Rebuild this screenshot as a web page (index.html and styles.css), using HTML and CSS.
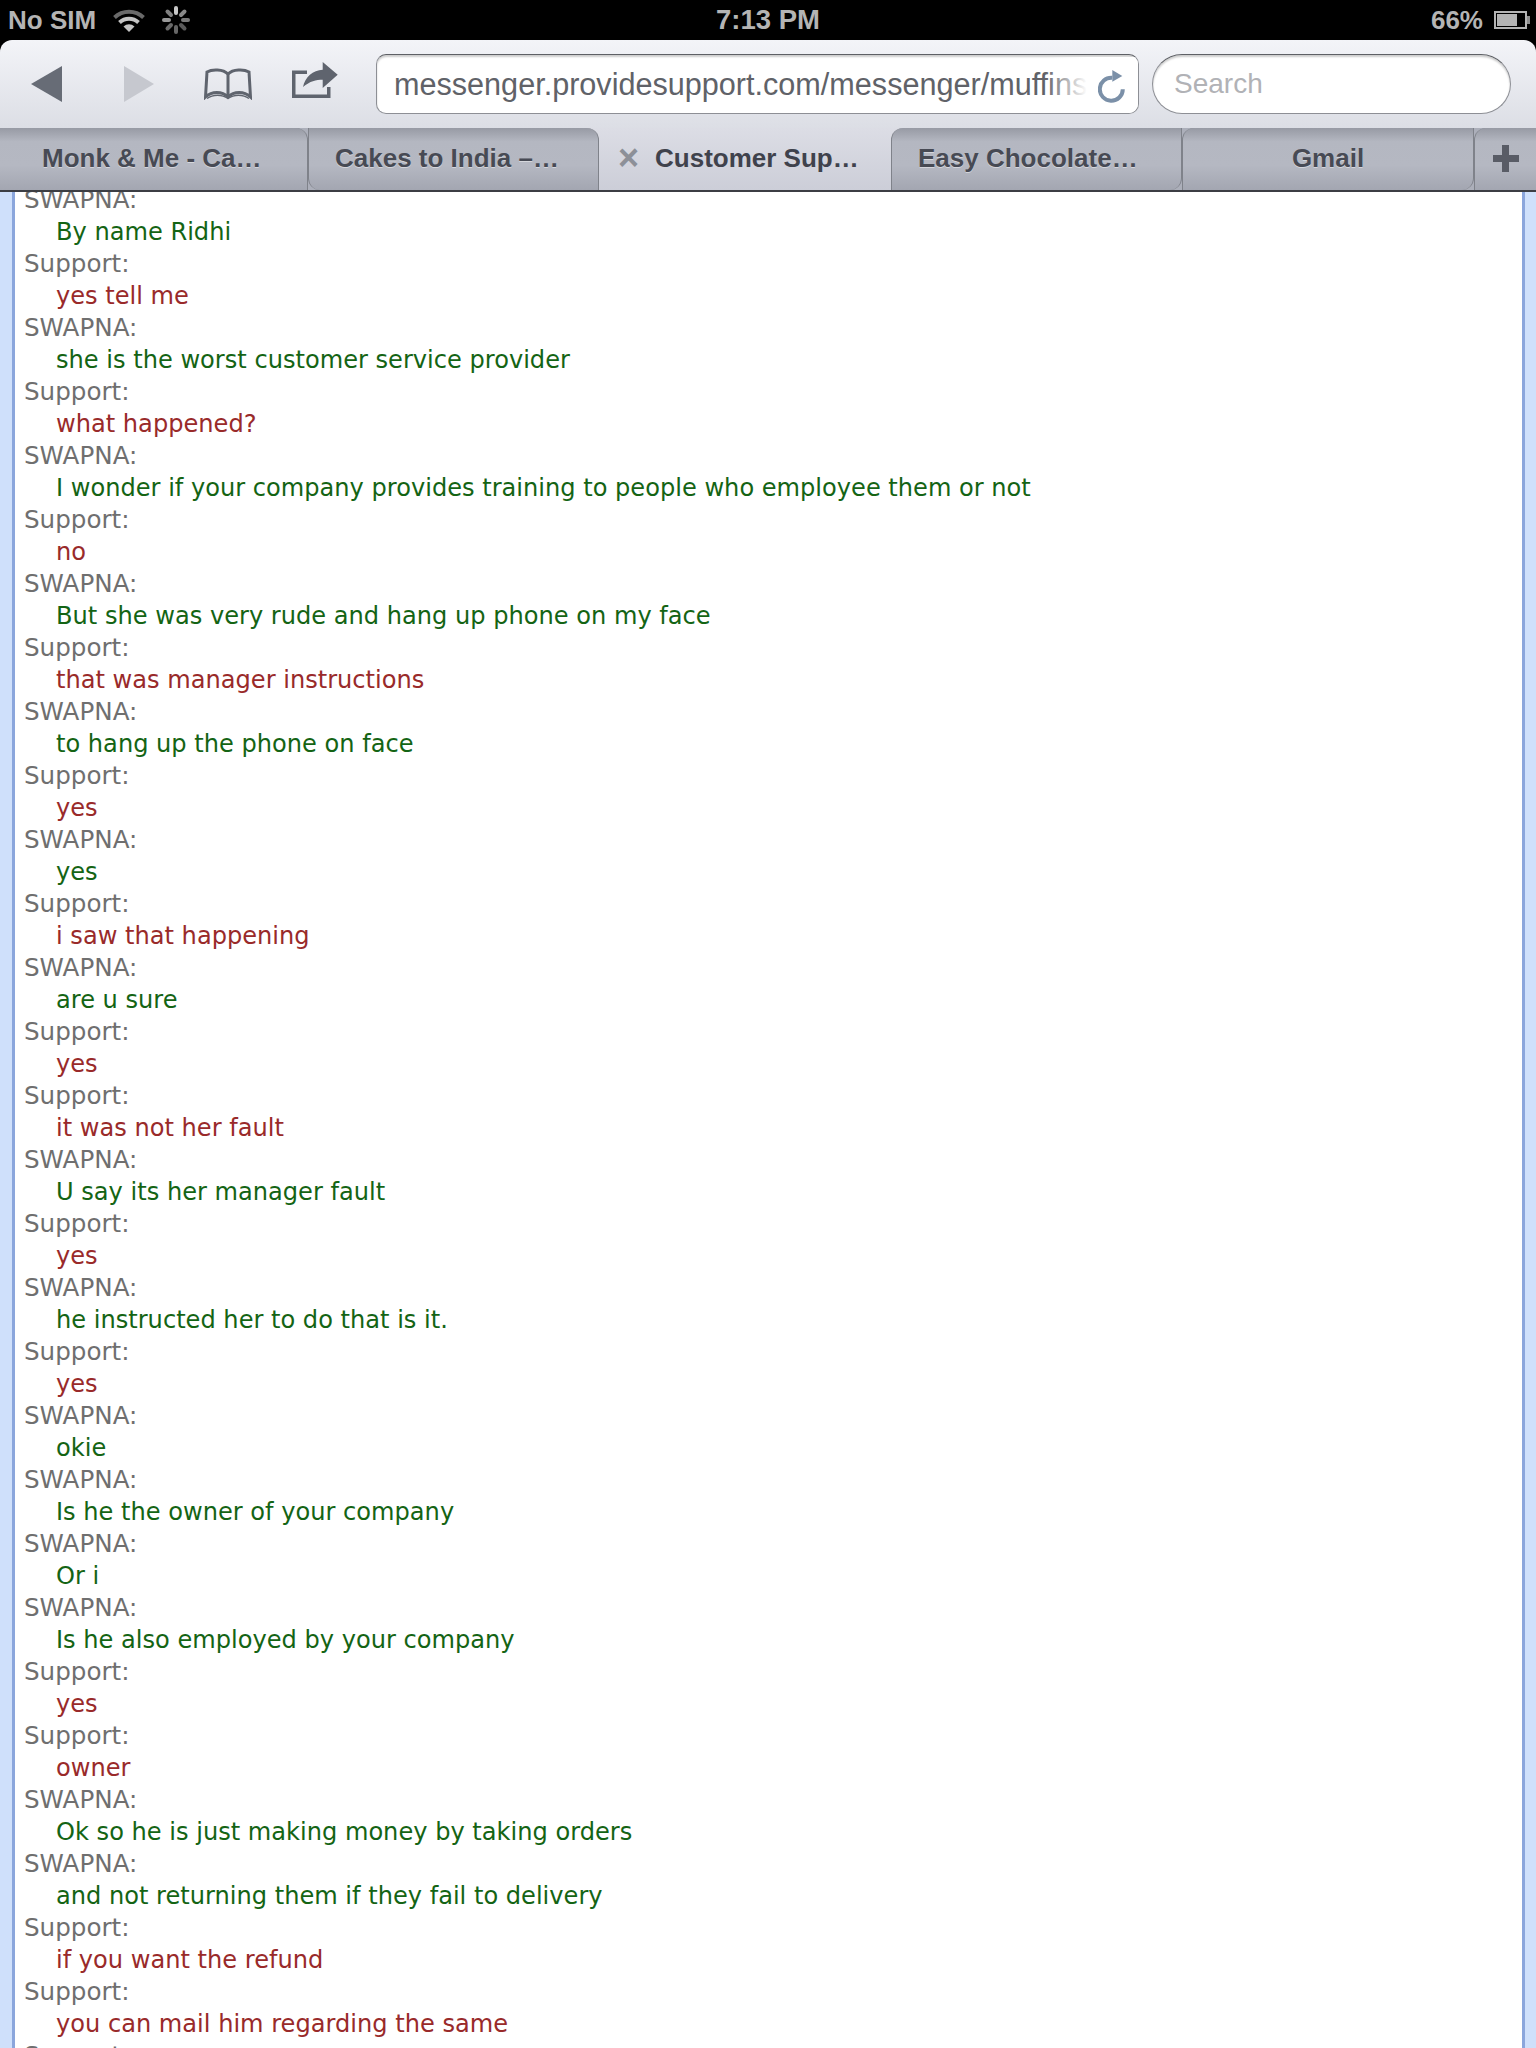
FILE: index.html
```html
<!DOCTYPE html>
<html lang="en">
<head>
  <meta charset="UTF-8">
  <meta name="viewport" content="width=device-width, initial-scale=1.0">
  <title>Customer Support</title>
  <link rel="stylesheet" href="styles.css">
</head>
<body>
  <div class="status-bar">
    <div class="status-left">
      <span>No SIM</span>
      <svg class="wifi" width="32" height="24" viewBox="0 0 32 24" fill="none"><path d="M1.500 9.500A21 21 0 0 1 30.500 9.500" stroke="#6a6a6a" stroke-width="4"/><path d="M6.500 14.500A14 14 0 0 1 25.500 14.500" stroke="#c4c4c4" stroke-width="4"/><path d="M16 24L10.500 18.500A8 8 0 0 1 21.500 18.500Z" fill="#c4c4c4"/></svg>
      <svg class="spinner" width="30" height="30" viewBox="0 0 30 30" stroke-width="4" stroke-linecap="round"><path d="M15 3V8" stroke="#c8c8c8"/><path d="M23.500 6.500L20 10" stroke="#8a8a8a"/><path d="M27 15H22" stroke="#7a7a7a"/><path d="M23.500 23.500L20 20" stroke="#5a5a5a"/><path d="M15 27V22" stroke="#666"/><path d="M6.500 23.500L10 20" stroke="#6a6a6a"/><path d="M3 15H8" stroke="#999"/><path d="M6.500 6.500L10 10" stroke="#808080"/></svg>
    </div>
    <div class="status-time">7:13 PM</div>
    <div class="status-right">
      <span>66%</span>
      <div class="battery"><div class="battery-level"></div></div>
      <div class="battery-tip"></div>
    </div>
  </div>

  <div class="browser">
    <div class="toolbar">
      <svg class="tool-icon back" width="34" height="38" viewBox="0 0 34 38"><path d="M32 1V37L1 19Z" fill="#676c76"/></svg>
      <svg class="tool-icon forward" width="32" height="38" viewBox="0 0 32 38"><path d="M1 1V37L31 19Z" fill="#c6c8cf"/></svg>
      <svg class="tool-icon book" width="48" height="32" viewBox="0 0 48 32" fill="none" stroke="#5f646e" stroke-width="3"><path d="M24 6C19 1 8 1 3 4L1.500 29C8 23 18 23 24 29C30 23 40 23 46.500 29L45 4C40 1 29 1 24 6Z"/><path d="M24 6V30"/><path d="M3 30.500C9 26 18 26 24 30.500C30 26 39 26 45 30.500" stroke-width="1.500"/></svg>
      <svg class="tool-icon share" width="46" height="36" viewBox="0 0 46 36"><path d="M0 8.500H15V12H3.500V32.500H35V25H38.500V36H0Z" fill="#5f646e"/><path d="M30.700 0L45.700 12.700L30.700 26V17.700C24 17.700 18 19 11 25C13 15 21 8 30.700 7.700Z" fill="#5f646e"/></svg>
      <div class="url-box">
        <span class="url-text">messenger.providesupport.com/messenger/muffins</span>
        <div class="url-fade"></div>
        <svg class="reload" width="27" height="33" viewBox="0 0 27 33" fill="none"><path d="M14.300 7.800A11.500 11.500 0 1 0 24.800 19.300" stroke="#7b90a8" stroke-width="4"/><path d="M14.300 0L24.300 6L14.300 11.700Z" fill="#7b90a8"/></svg>
      </div>
      <div class="search-box">Search</div>
    </div>

    <div class="tabs">
      <div class="tab tab-first">Monk &amp; Me - Ca…</div>
      <div class="tab tab-left">Cakes to India –…</div>
      <div class="tab tab-active"><span class="tab-close">×</span>Customer Sup…</div>
      <div class="tab tab-right">Easy Chocolate…</div>
      <div class="tab tab-gmail">Gmail</div>
      <div class="tab tab-plus"><div class="plus"></div></div>
    </div>
  </div>

  <div class="page">
    <div class="chat">
      <div class="who">SWAPNA:</div><div class="msg cust">By name Ridhi</div>
      <div class="who">Support:</div><div class="msg sup">yes tell me</div>
      <div class="who">SWAPNA:</div><div class="msg cust">she is the worst customer service provider</div>
      <div class="who">Support:</div><div class="msg sup">what happened?</div>
      <div class="who">SWAPNA:</div><div class="msg cust">I wonder if your company provides training to people who employee them or not</div>
      <div class="who">Support:</div><div class="msg sup">no</div>
      <div class="who">SWAPNA:</div><div class="msg cust">But she was very rude and hang up phone on my face</div>
      <div class="who">Support:</div><div class="msg sup">that was manager instructions</div>
      <div class="who">SWAPNA:</div><div class="msg cust">to hang up the phone on face</div>
      <div class="who">Support:</div><div class="msg sup">yes</div>
      <div class="who">SWAPNA:</div><div class="msg cust">yes</div>
      <div class="who">Support:</div><div class="msg sup">i saw that happening</div>
      <div class="who">SWAPNA:</div><div class="msg cust">are u sure</div>
      <div class="who">Support:</div><div class="msg sup">yes</div>
      <div class="who">Support:</div><div class="msg sup">it was not her fault</div>
      <div class="who">SWAPNA:</div><div class="msg cust">U say its her manager fault</div>
      <div class="who">Support:</div><div class="msg sup">yes</div>
      <div class="who">SWAPNA:</div><div class="msg cust">he instructed her to do that is it.</div>
      <div class="who">Support:</div><div class="msg sup">yes</div>
      <div class="who">SWAPNA:</div><div class="msg cust">okie</div>
      <div class="who">SWAPNA:</div><div class="msg cust">Is he the owner of your company</div>
      <div class="who">SWAPNA:</div><div class="msg cust">Or i</div>
      <div class="who">SWAPNA:</div><div class="msg cust">Is he also employed by your company</div>
      <div class="who">Support:</div><div class="msg sup">yes</div>
      <div class="who">Support:</div><div class="msg sup">owner</div>
      <div class="who">SWAPNA:</div><div class="msg cust">Ok so he is just making money by taking orders</div>
      <div class="who">SWAPNA:</div><div class="msg cust">and not returning them if they fail to delivery</div>
      <div class="who">Support:</div><div class="msg sup">if you want the refund</div>
      <div class="who">Support:</div><div class="msg sup">you can mail him regarding the same</div>
      <div class="who">Support:</div>
    </div>
    <div class="corner corner-left"></div>
    <div class="corner corner-right"></div>
  </div>
</body>
</html>
```

FILE: styles.css
```css
html, body {
  margin: 0;
  height: 2048px;
  overflow: hidden;
  background-color: #000;
}
.status-bar {
  height: 40px;
  display: flex;
  justify-content: space-between;
  align-items: center;
  padding: 0 6px 0 8px;
  position: relative;
  font-family: 'Liberation Sans', sans-serif;
  font-size: 26px;
  font-weight: bold;
  color: #b4b4b4;
}
.status-left,
.status-right {
  display: flex;
  align-items: center;
}
.wifi {
  margin-left: 17px;
}
.spinner {
  margin-left: 16px;
}
.status-time {
  position: absolute;
  left: 0;
  right: 0;
  text-align: center;
  font-size: 27.5px;
}
.status-right {
  position: relative;
  z-index: 1;
}
.battery {
  width: 33px;
  height: 18px;
  margin-left: 11px;
  border: 2px solid #b4b4b4;
  padding: 1px;
  box-sizing: border-box;
}
.battery-level {
  width: 20px;
  height: 100%;
  background-color: #b4b4b4;
}
.battery-tip {
  width: 3px;
  height: 8px;
  background-color: #8e8e8e;
}
.browser {
  height: 152px;
  border-radius: 12px 12px 0 0;
  overflow: hidden;
  font-family: 'Liberation Sans', sans-serif;
}
.toolbar {
  height: 88px;
  display: flex;
  align-items: center;
  background: linear-gradient(#f3f4f8, #dcdee5);
}
.tool-icon {
  flex: none;
}
.back {
  margin-left: 30px;
}
.forward {
  margin-left: 59px;
}
.book {
  margin-left: 49px;
}
.share {
  margin-left: 40px;
  margin-bottom: 8px;
}
.url-box {
  width: 763px;
  height: 60px;
  margin-left: 38px;
  box-sizing: border-box;
  display: flex;
  align-items: center;
  padding-left: 17px;
  position: relative;
  overflow: hidden;
  background-color: #fff;
  border: 1px solid #8d8f95;
  border-top-color: #5e6065;
  border-radius: 10px;
  box-shadow: inset 0 2px 2px rgba(0, 0, 0, 0.2);
  font-size: 30.6px;
  color: #606268;
  white-space: nowrap;
}
.url-fade {
  position: absolute;
  top: 2px;
  right: 51px;
  width: 42px;
  height: 54px;
  background: linear-gradient(to right, rgba(255, 255, 255, 0), #fff);
}
.url-box::after {
  content: "";
  position: absolute;
  top: 2px;
  right: 0;
  bottom: 0;
  width: 51px;
  background-color: #fff;
}
.reload {
  position: absolute;
  right: 13px;
  top: 15px;
  z-index: 1;
}
.search-box {
  width: 359px;
  height: 60px;
  margin-left: 13px;
  box-sizing: border-box;
  display: flex;
  align-items: center;
  padding-left: 21px;
  background-color: #fff;
  border: 1px solid #8d8f95;
  border-top-color: #5e6065;
  border-radius: 30px;
  box-shadow: inset 0 2px 2px rgba(0, 0, 0, 0.2);
  font-size: 28px;
  color: #b1b2b6;
}
.tabs {
  height: 64px;
  display: flex;
  box-sizing: border-box;
  background-color: #acafba;
  border-bottom: 2px solid #3c3e44;
}
.tab {
  flex: none;
  box-sizing: border-box;
  display: flex;
  align-items: center;
  padding-bottom: 2px;
  position: relative;
  z-index: 1;
  background: linear-gradient(#979aa4, #b4b7c1 22%, #b5b8c2 60%, #a3a6b1);
  font-size: 26px;
  font-weight: bold;
  color: #474a54;
  text-shadow: 0 1px 0 rgba(255, 255, 255, 0.45);
  white-space: nowrap;
}
.tab-first {
  width: 308px;
  padding-left: 42px;
  border-right: 1px solid #7f828a;
  border-top-right-radius: 12px;
}
.tab-left {
  width: 291px;
  padding-left: 26px;
  border-left: 1px solid #7f828a;
  border-right: 1px solid #7f828a;
  border-top-right-radius: 12px;
  border-bottom-left-radius: 12px;
}
.tab-active {
  width: 316px;
  margin: 0 -12px;
  padding-left: 31px;
  z-index: 0;
  border-radius: 0 0 12px 12px;
  background: linear-gradient(#dcdde5, #ccced8);
  text-shadow: none;
  color: #3f424c;
}
.tab-close {
  font-size: 36px;
  color: #8d9098;
  margin-right: 16px;
  line-height: 1;
}
.tab-right {
  width: 291px;
  padding-left: 26px;
  border-left: 1px solid #7f828a;
  border-right: 1px solid #7f828a;
  border-top-left-radius: 12px;
  border-bottom-right-radius: 12px;
}
.tab-gmail {
  width: 292px;
  justify-content: center;
  border-left: 1px solid #7f828a;
  border-right: 1px solid #7f828a;
  border-top-left-radius: 12px;
  border-bottom-right-radius: 12px;
}
.tab-plus {
  width: 62px;
  justify-content: center;
  border-left: 1px solid #7f828a;
  border-top-left-radius: 12px;
}
.plus {
  width: 26px;
  height: 27px;
  background:
    linear-gradient(#595c66, #595c66) center / 7px 27px no-repeat,
    linear-gradient(#595c66, #595c66) center / 26px 7px no-repeat;
}
.page {
  height: 1856px;
  position: relative;
  overflow: hidden;
  box-sizing: border-box;
  background-color: #fff;
  border-left: 12px solid #cfe0fb;
  border-right: 11px solid #cfe0fb;
  box-shadow: inset 3px 0 0 #8ba6dc, inset -3px 0 0 #8ba6dc;
}
.chat {
  margin-top: -8px;
  padding-left: 12px;
  font-family: 'DejaVu Sans', sans-serif;
  font-size: 24.1px;
  line-height: 32px;
  white-space: nowrap;
}
.who {
  color: #6f6f6f;
  font-size: 24.6px;
}
.msg {
  padding-left: 32px;
}
.cust {
  color: #146414;
}
.sup {
  color: #992a2a;
}
.corner {
  position: absolute;
  bottom: 0;
  width: 9px;
  height: 9px;
  background-color: #000;
}
.corner-left {
  left: -12px;
  border-radius: 0 100% 0 0;
}
.corner-right {
  right: -11px;
  border-radius: 100% 0 0 0;
}
```
